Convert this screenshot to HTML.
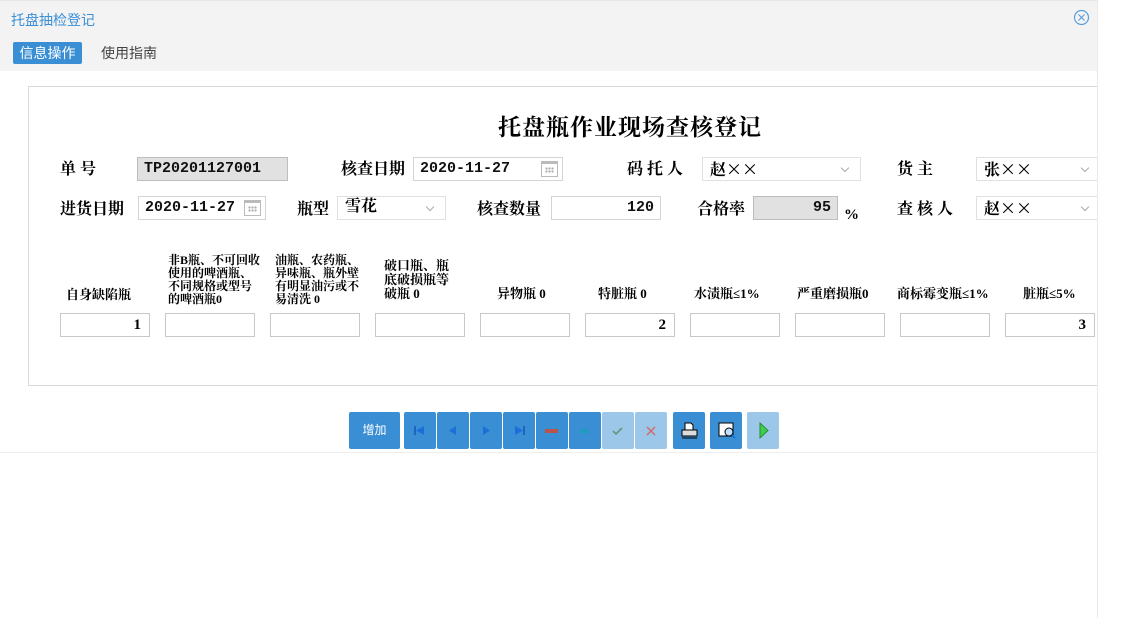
<!DOCTYPE html>
<html><head><meta charset="utf-8"><style>
*{margin:0;padding:0;box-sizing:border-box}
body{width:1129px;height:618px;background:#fff;position:relative;overflow:hidden;font-family:"Liberation Serif","Noto Serif CJK SC",serif;color:#000}
#w{position:absolute;left:0;top:0;width:1097px;height:618px;overflow:hidden}
.a{position:absolute}
.sans{font-family:"Liberation Sans","Noto Sans CJK SC",sans-serif}
.lbl{position:absolute;font-size:16px;font-weight:bold;line-height:20px;white-space:nowrap}
.in{position:absolute;border:1px solid #d4d4d4;background:#fff;font-size:15px;line-height:21px;padding:0 6px;font-family:"Liberation Mono","Noto Serif CJK SC",monospace;font-weight:bold;color:#111}
.gray{background:#e1e1e1;border-color:#bdbdbd}
.sel{position:absolute;border:1px solid #e0e0e0;background:#fff;font-size:16px;font-weight:bold;line-height:20px;padding:0 7px}
.x{font-family:"Noto Sans CJK SC",sans-serif;font-weight:normal;font-size:16px}
.sel:after{content:"";position:absolute;right:12px;top:7px;width:5px;height:5px;border-right:1px solid #aaa;border-bottom:1px solid #aaa;transform:rotate(45deg)}
.cal{position:absolute;right:4px;top:3px;width:17px;height:16px;border:1px solid #bbb;border-top:3px solid #bbb}
.cal:after{content:"";position:absolute;left:3px;top:3px;width:9px;height:6px;background:radial-gradient(circle,#aaa 1px,transparent 1.2px) 0 0/3px 3px}
.h{position:absolute;font-size:12px;font-weight:bold;line-height:13px;white-space:nowrap}
.box{position:absolute;top:313px;width:90px;height:24px;border:1px solid #c8c8c8;font-size:15px;font-weight:bold;text-align:right;padding-right:8px;line-height:22px;font-family:"Liberation Serif",serif}
.b{position:absolute;top:412px;height:37px;width:32px;background:#3a8fd4;border-radius:2px}
.l{background:#9dc7e8}
</style></head><body>
<div class="a" style="left:1097px;top:0;width:1px;height:618px;background:#eaeaea"></div>
<div id="w">
<div class="a" style="left:0;top:0;width:1098px;height:71px;background:#f3f3f3;border-top:1px solid #e6e6e6"></div>
<div class="a sans" style="left:11px;top:10px;font-size:14px;color:#3b8fd6">托盘抽检登记</div>
<svg class="a" style="left:1073px;top:9px" width="17" height="17" viewBox="0 0 17 17"><circle cx="8.5" cy="8.5" r="7" fill="none" stroke="#5a9fdc" stroke-width="1.2"/><path d="M5.5 5.5l6 6M11.5 5.5l-6 6" stroke="#5a9fdc" stroke-width="1.2"/></svg>
<div class="a sans" style="left:13px;top:42px;width:69px;height:22px;background:#3a8fd4;color:#fff;font-size:14px;line-height:22px;text-align:center;border-radius:2px">信息操作</div>
<div class="a sans" style="left:101px;top:42px;font-size:14px;line-height:22px;color:#444">使用指南</div>

<div class="a" style="left:28px;top:86px;width:1075px;height:300px;border:1px solid #d8d8d8;border-right:none"></div>
<div class="a" style="left:0;top:452px;width:1097px;height:1px;background:#eee"></div>

<div class="a" style="left:498px;top:109px;font-size:23px;font-weight:bold;letter-spacing:1px">托盘瓶作业现场查核登记</div>

<div class="lbl" style="left:60px;top:160px">单 号</div>
<div class="in gray" style="left:137px;top:157px;width:151px;height:24px">TP20201127001</div>
<div class="lbl" style="left:341px;top:160px">核查日期</div>
<div class="in" style="left:413px;top:157px;width:150px;height:24px">2020-11-27<span class="cal"></span></div>
<div class="lbl" style="left:627px;top:160px">码 托 人</div>
<div class="sel" style="left:702px;top:157px;width:159px;height:24px">赵<span class="x">××</span></div>
<div class="lbl" style="left:897px;top:160px">货 主</div>
<div class="sel" style="left:976px;top:157px;width:125px;height:24px">张<span class="x">××</span></div>

<div class="lbl" style="left:60px;top:200px">进货日期</div>
<div class="in" style="left:138px;top:196px;width:128px;height:24px">2020-11-27<span class="cal"></span></div>
<div class="lbl" style="left:297px;top:200px">瓶型</div>
<div class="sel" style="left:337px;top:196px;width:109px;height:24px">雪花</div>
<div class="lbl" style="left:477px;top:200px">核查数量</div>
<div class="in" style="left:551px;top:196px;width:110px;height:24px;text-align:right">120</div>
<div class="lbl" style="left:697px;top:200px">合格率</div>
<div class="in gray" style="left:753px;top:196px;width:85px;height:24px;text-align:right">95</div>
<div class="lbl" style="left:844px;top:205px;font-size:15px">%</div>
<div class="lbl" style="left:897px;top:200px">查 核 人</div>
<div class="sel" style="left:976px;top:196px;width:125px;height:24px">赵<span class="x">××</span></div>

<div class="h" style="left:66px;top:288px;font-size:13px">自身缺陷瓶</div>
<div class="h" style="left:168px;top:254px">非B瓶、不可回收<br>使用的啤酒瓶、<br>不同规格或型号<br>的啤酒瓶0</div>
<div class="h" style="left:275px;top:254px">油瓶、农药瓶、<br>异味瓶、瓶外壁<br>有明显油污或不<br>易清洗 0</div>
<div class="h" style="left:384px;top:259px;line-height:14px;font-size:13px">破口瓶、瓶<br>底破损瓶等<br>破瓶 0</div>
<div class="h" style="left:497px;top:287px;font-size:13px">异物瓶 0</div>
<div class="h" style="left:598px;top:287px;font-size:13px">特脏瓶 0</div>
<div class="h" style="left:694px;top:287px;font-size:13px">水渍瓶≤1%</div>
<div class="h" style="left:797px;top:287px;font-size:13px">严重磨损瓶0</div>
<div class="h" style="left:897px;top:287px;font-size:13px">商标霉变瓶≤1%</div>
<div class="h" style="left:1023px;top:287px;font-size:13px">脏瓶≤5%</div>

<div class="box" style="left:60px">1</div>
<div class="box" style="left:165px"></div>
<div class="box" style="left:270px"></div>
<div class="box" style="left:375px"></div>
<div class="box" style="left:480px"></div>
<div class="box" style="left:585px">2</div>
<div class="box" style="left:690px"></div>
<div class="box" style="left:795px"></div>
<div class="box" style="left:900px"></div>
<div class="box" style="left:1005px">3</div>

<div class="b sans" style="left:349px;width:51px;color:#fff;font-size:12px;line-height:37px;text-align:center">增加</div>
<div class="b" style="left:404px"><svg width="32" height="37"><path d="M11 14v9" stroke="#1457b8" stroke-width="1.5"/><path d="M20 14l-8 4.5 8 4.5z" fill="#1a6fd8"/></svg></div>
<div class="b" style="left:437px"><svg width="32" height="37"><path d="M19 14l-7 4.5 7 4.5z" fill="#1a6fd8"/></svg></div>
<div class="b" style="left:470px"><svg width="32" height="37"><path d="M13 14l7 4.5-7 4.5z" fill="#1a6fd8"/></svg></div>
<div class="b" style="left:503px"><svg width="32" height="37"><path d="M12 14l8 4.5-8 4.5z" fill="#1a6fd8"/><path d="M21 14v9" stroke="#1457b8" stroke-width="1.5"/></svg></div>
<div class="b" style="left:536px"><svg width="32" height="37"><path d="M9 18h13M9 20h13" stroke="#e2401c" stroke-width="1.5"/></svg></div>
<div class="b" style="left:569px"><svg width="32" height="37"><path d="M10 21l5.5-5 5.5 5z" fill="#18a0b8"/></svg></div>
<div class="b l" style="left:602px"><svg width="32" height="37"><path d="M11 19l3 3 6-6" fill="none" stroke="#5a9a7a" stroke-width="1.6"/></svg></div>
<div class="b l" style="left:635px"><svg width="32" height="37"><path d="M12 15l8 8M20 15l-8 8" stroke="#d26a6a" stroke-width="1.5"/></svg></div>
<div class="b" style="left:673px"><svg width="33" height="37"><path d="M12 11h6l2 2v5h-8z" fill="#fff" stroke="#000"/><rect x="9" y="18" width="15" height="6" fill="#ddd" stroke="#000"/><path d="M9 26h15" stroke="#000"/></svg></div>
<div class="b" style="left:710px"><svg width="33" height="37"><rect x="9" y="11" width="14" height="13" fill="#fff" stroke="#000"/><circle cx="19" cy="20" r="4" fill="#bfe0ff" stroke="#000"/><path d="M22 23l3 3" stroke="#1a6fd8" stroke-width="2"/></svg></div>
<div class="b l" style="left:747px"><svg width="33" height="37"><path d="M13 11l8 7.5-8 7.5z" fill="#3ccf4a" stroke="#2a8a34"/></svg></div>
</div>
</body></html>
